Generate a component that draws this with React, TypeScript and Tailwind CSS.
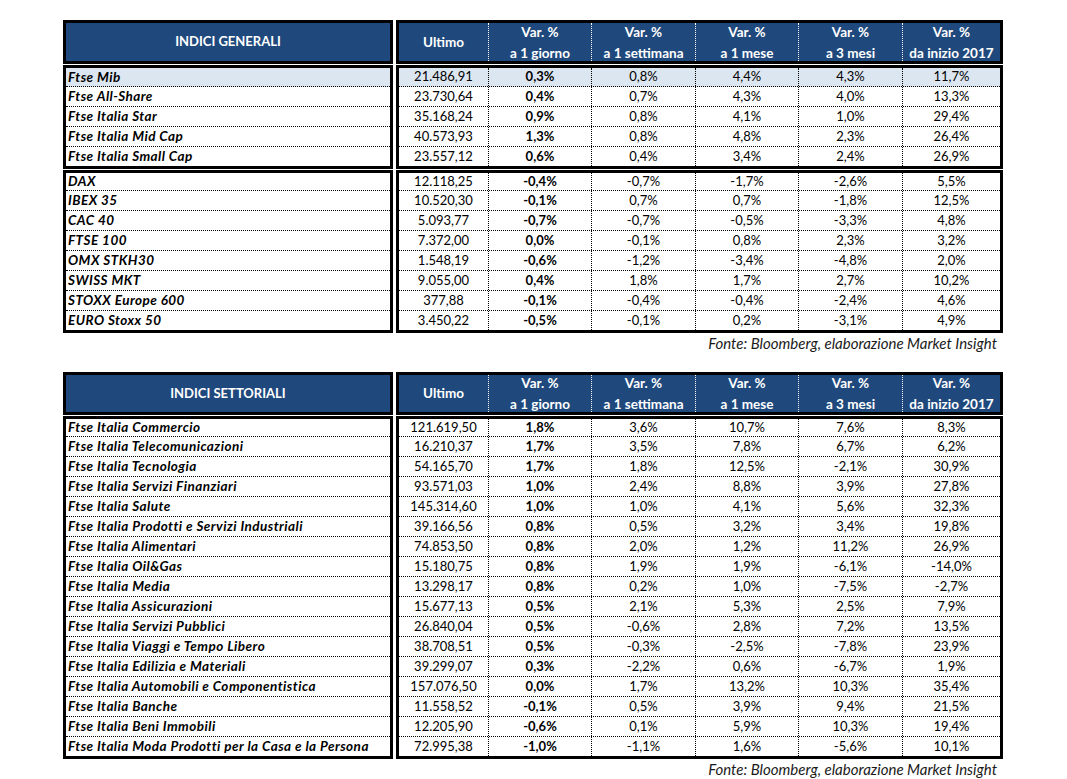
type Row = [string, string, string, string, string, string, string];

const GENERALI_IT: Row[] = [
  ['Ftse Mib', '21.486,91', '0,3%', '0,8%', '4,4%', '4,3%', '11,7%'],
  ['Ftse All-Share', '23.730,64', '0,4%', '0,7%', '4,3%', '4,0%', '13,3%'],
  ['Ftse Italia Star', '35.168,24', '0,9%', '0,8%', '4,1%', '1,0%', '29,4%'],
  ['Ftse Italia Mid Cap', '40.573,93', '1,3%', '0,8%', '4,8%', '2,3%', '26,4%'],
  ['Ftse Italia Small Cap', '23.557,12', '0,6%', '0,4%', '3,4%', '2,4%', '26,9%'],
];

const GENERALI_EU: Row[] = [
  ['DAX', '12.118,25', '-0,4%', '-0,7%', '-1,7%', '-2,6%', '5,5%'],
  ['IBEX 35', '10.520,30', '-0,1%', '0,7%', '0,7%', '-1,8%', '12,5%'],
  ['CAC 40', '5.093,77', '-0,7%', '-0,7%', '-0,5%', '-3,3%', '4,8%'],
  ['FTSE 100', '7.372,00', '0,0%', '-0,1%', '0,8%', '2,3%', '3,2%'],
  ['OMX STKH30', '1.548,19', '-0,6%', '-1,2%', '-3,4%', '-4,8%', '2,0%'],
  ['SWISS MKT', '9.055,00', '0,4%', '1,8%', '1,7%', '2,7%', '10,2%'],
  ['STOXX Europe 600', '377,88', '-0,1%', '-0,4%', '-0,4%', '-2,4%', '4,6%'],
  ['EURO Stoxx 50', '3.450,22', '-0,5%', '-0,1%', '0,2%', '-3,1%', '4,9%'],
];

const SETTORIALI: Row[] = [
  ['Ftse Italia Commercio', '121.619,50', '1,8%', '3,6%', '10,7%', '7,6%', '8,3%'],
  ['Ftse Italia Telecomunicazioni', '16.210,37', '1,7%', '3,5%', '7,8%', '6,7%', '6,2%'],
  ['Ftse Italia Tecnologia', '54.165,70', '1,7%', '1,8%', '12,5%', '-2,1%', '30,9%'],
  ['Ftse Italia Servizi Finanziari', '93.571,03', '1,0%', '2,4%', '8,8%', '3,9%', '27,8%'],
  ['Ftse Italia Salute', '145.314,60', '1,0%', '1,0%', '4,1%', '5,6%', '32,3%'],
  ['Ftse Italia Prodotti e Servizi Industriali', '39.166,56', '0,8%', '0,5%', '3,2%', '3,4%', '19,8%'],
  ['Ftse Italia Alimentari', '74.853,50', '0,8%', '2,0%', '1,2%', '11,2%', '26,9%'],
  ['Ftse Italia Oil&Gas', '15.180,75', '0,8%', '1,9%', '1,9%', '-6,1%', '-14,0%'],
  ['Ftse Italia Media', '13.298,17', '0,8%', '0,2%', '1,0%', '-7,5%', '-2,7%'],
  ['Ftse Italia Assicurazioni', '15.677,13', '0,5%', '2,1%', '5,3%', '2,5%', '7,9%'],
  ['Ftse Italia Servizi Pubblici', '26.840,04', '0,5%', '-0,6%', '2,8%', '7,2%', '13,5%'],
  ['Ftse Italia Viaggi e Tempo Libero', '38.708,51', '0,5%', '-0,3%', '-2,5%', '-7,8%', '23,9%'],
  ['Ftse Italia Edilizia e Materiali', '39.299,07', '0,3%', '-2,2%', '0,6%', '-6,7%', '1,9%'],
  ['Ftse Italia Automobili e Componentistica', '157.076,50', '0,0%', '1,7%', '13,2%', '10,3%', '35,4%'],
  ['Ftse Italia Banche', '11.558,52', '-0,1%', '0,5%', '3,9%', '9,4%', '21,5%'],
  ['Ftse Italia Beni Immobili', '12.205,90', '-0,6%', '0,1%', '5,9%', '10,3%', '19,4%'],
  ['Ftse Italia Moda Prodotti per la Casa e la Persona', '72.995,38', '-1,0%', '-1,1%', '1,6%', '-5,6%', '10,1%'],
];

// column widths inside the data block (399 -> 1000)
const COLS = ['w-[89px]', 'w-[103px]', 'w-[104px]', 'w-[103px]', 'w-[104px]', 'w-[98px]'];

const VAR_HEADERS = ['a 1 giorno', 'a 1 settimana', 'a 1 mese', 'a 3 mesi', 'da inizio 2017'];

function Header({ title, height }: { title: string; height: string }) {
  return (
    <div className={`flex gap-[3px] ${height}`}>
      <div className="w-[330px] border-[3px] border-black bg-[#1f497d] flex items-center justify-center text-white font-bold text-[13px]">
        {title}
      </div>
      <div className="w-[607px] border-[3px] border-black bg-[#1f497d] flex text-white font-bold text-[13.5px]">
        <div className={`${COLS[0]} flex items-center justify-center`}>Ultimo</div>
        {VAR_HEADERS.map((h, i) => (
          <div
            key={h}
            className={`${COLS[i + 1]} border-l border-dotted border-white flex flex-col items-center justify-center leading-[21px] pt-[1px]`}
          >
            <span>Var. %</span>
            <span>{h}</span>
          </div>
        ))}
      </div>
    </div>
  );
}

function Body({ rows, heights, highlightFirst }: { rows: Row[]; heights: string[]; highlightFirst?: boolean }) {
  const rowCls = (i: number) =>
    `${heights[i]} ${i < rows.length - 1 ? 'border-b border-dotted border-black' : ''} ${
      highlightFirst && i === 0 ? 'bg-[#dce6f1]' : ''
    }`;

  return (
    <div className="flex gap-[3px] text-black">
      <div className="w-[330px] border-[3px] border-black">
        {rows.map((r, i) => (
          <div
            key={r[0]}
            className={`${rowCls(i)} flex items-center pl-[2px] font-bold italic text-[13.5px] tracking-[0.45px]`}
          >
            {r[0]}
          </div>
        ))}
      </div>
      <div className="w-[607px] border-[3px] border-black text-[13px]">
        {rows.map((r, i) => (
          <div key={r[0]} className={`${rowCls(i)} flex`}>
            {r.slice(1).map((v, j) => (
              <div
                key={j}
                className={`${COLS[j]} ${j > 0 ? 'border-l border-dotted border-black' : ''} ${
                  j === 1 ? 'font-bold' : ''
                } flex items-center justify-center`}
              >
                {v}
              </div>
            ))}
          </div>
        ))}
      </div>
    </div>
  );
}

function Fonte() {
  return (
    <div className="w-[940px] h-[20px] flex items-center justify-end pr-[6px] italic text-[15px] text-[#1a1a1a]">
      Fonte: Bloomberg, elaborazione Market Insight
    </div>
  );
}

export default function App() {
  const mid = (n: number) => Array.from({ length: n }, () => 'h-[20px]');
  return (
    <div className="w-[1067px] h-[779px] bg-white pt-[20px] pl-[63px] [font-family:Lato,sans-serif] overflow-hidden">
      <Header title="INDICI GENERALI" height="h-[44px]" />
      <div className="h-[1px]" />
      <Body rows={GENERALI_IT} heights={['h-[19px]', ...mid(3), 'h-[19px]']} highlightFirst />
      <div className="h-[1px]" />
      <Body rows={GENERALI_EU} heights={['h-[18px]', ...mid(6), 'h-[19px]']} />
      <Fonte />

      <div className="h-[19px]" />
      <Header title="INDICI SETTORIALI" height="h-[43px]" />
      <div className="h-[1px]" />
      <Body rows={SETTORIALI} heights={['h-[18px]', ...mid(15), 'h-[19px]']} />
      <Fonte />
    </div>
  );
}
